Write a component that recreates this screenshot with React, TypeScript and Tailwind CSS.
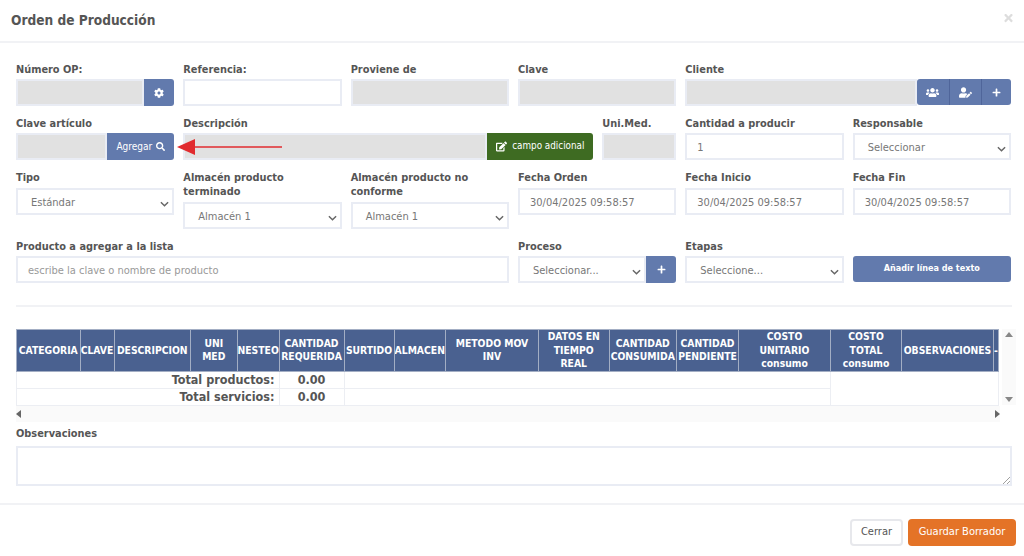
import { FaCog, FaEdit, FaPlus, FaSearch, FaTimes, FaUserEdit, FaUsers } from 'react-icons/fa'

const fieldBase = 'h-[27px] w-full border-2 border-[#e9ecf4] pt-[4px] text-[11px] text-[#777]'
const grayField = 'h-[27px] border-2 border-[#e9ecf4] bg-[#e1e1e1]'
const blueBtn = 'flex items-center justify-center bg-[#627aad] text-white'

function Label({ children }: { children: React.ReactNode }) {
  return <label className="block pt-[1px] text-[10.9px] font-bold leading-[14px] text-[#555]">{children}</label>
}

function Chevron() {
  return (
    <svg viewBox="0 0 10 6" className="h-[6px] w-[9px] shrink-0">
      <path d="M1 1l4 4 4-4" fill="none" stroke="#666" strokeWidth="1.6" />
    </svg>
  )
}

function SelectBox({ value }: { value: string }) {
  return (
    <div className={`${fieldBase} flex items-center justify-between bg-white pl-[13px] pr-[3px]`}>
      <span>{value}</span>
      <Chevron />
    </div>
  )
}

function TextBox({ value, placeholder }: { value?: string; placeholder?: string }) {
  return (
    <div className={`${fieldBase} flex items-center bg-white pl-[10px]`}>
      {value}
      {placeholder && <span className="text-[#999]">{placeholder}</span>}
    </div>
  )
}

const columns = [
  { name: ['CATEGORIA'], w: 'w-[63.5px]' },
  { name: ['CLAVE'], w: 'w-[34px]' },
  { name: ['DESCRIPCION'], w: 'w-[76.5px]' },
  { name: ['UNI', 'MED'], w: 'w-[46.5px]' },
  { name: ['NESTEO'], w: 'w-[42px]' },
  { name: ['CANTIDAD', 'REQUERIDA'], w: 'w-[65px]' },
  { name: ['SURTIDO'], w: 'w-[50px]' },
  { name: ['ALMACEN'], w: 'w-[51.5px]' },
  { name: ['METODO MOV', 'INV'], w: 'w-[93px]' },
  { name: ['DATOS EN', 'TIEMPO', 'REAL'], w: 'w-[70.5px]' },
  { name: ['CANTIDAD', 'CONSUMIDA'], w: 'w-[67.5px]' },
  { name: ['CANTIDAD', 'PENDIENTE'], w: 'w-[62px]' },
  { name: ['COSTO', 'UNITARIO', 'consumo'], w: 'w-[92px]' },
  { name: ['COSTO', 'TOTAL', 'consumo'], w: 'w-[71px]' },
  { name: ['OBSERVACIONES'], w: 'w-[92px]' },
  { name: ['-'], w: 'w-[5px]' },
]

function OrdersTable() {
  return (
    <table className="w-[982px] table-fixed border-collapse">
      <colgroup>
        {columns.map((col, i) => (
          <col key={i} className={col.w} />
        ))}
      </colgroup>
      <thead>
        <tr className="h-[41px]">
          {columns.map((col, i) => (
            <th
              key={i}
              className="overflow-hidden whitespace-nowrap border border-[#a3aec4] bg-[#4a6190] p-0 text-center text-[10.3px] font-bold leading-[13.5px] text-white"
            >
              {col.name.map((line) => (
                <div key={line}>{line}</div>
              ))}
            </th>
          ))}
        </tr>
      </thead>
      <tbody className="text-[12.5px] font-bold leading-[16px] text-[#555]">
        <tr className="h-[17px]">
          <td colSpan={5} className="border border-[#eceef3] p-0 pr-[4px] text-right">Total productos:</td>
          <td className="border border-[#eceef3] p-0 text-center">0.00</td>
          <td colSpan={7} className="border border-[#eceef3] p-0" />
          <td rowSpan={2} colSpan={3} className="border border-[#eceef3] p-0" />
        </tr>
        <tr className="h-[17px]">
          <td colSpan={5} className="border border-[#eceef3] p-0 pr-[4px] text-right">Total servicios:</td>
          <td className="border border-[#eceef3] p-0 text-center">0.00</td>
          <td colSpan={7} className="border border-[#eceef3] p-0" />
        </tr>
      </tbody>
    </table>
  )
}

export default function App() {
  return (
    <div className="flex h-[556px] w-[1024px] flex-col overflow-hidden bg-white font-['DejaVu_Sans_Condensed','DejaVu_Sans',sans-serif]">
      <header className="flex h-[43px] shrink-0 items-start justify-between border-b-2 border-[#f1f2f5] pl-[11px] pr-[10px]">
        <h1 className="mt-[12px] text-[13.6px] font-bold leading-[17px] text-[#555]">Orden de Producción</h1>
        <FaTimes className="mt-[12px] h-[12px] w-[11px] text-[#ddd]" />
      </header>

      <div className="shrink-0 pl-[16px] pr-[12px]">
        <div className="grid w-[995px] grid-cols-6 gap-x-[9px] pt-[19px]">
          <div className="h-[54px]">
            <Label>Número OP:</Label>
            <div className="mt-[2px] flex">
              <div className={`${grayField} flex-1`} />
              <div className={`${blueBtn} h-[27px] w-[30px] rounded-r-[3px]`}>
                <FaCog className="h-[10px] w-[10px]" />
              </div>
            </div>
          </div>
          <div>
            <Label>Referencia:</Label>
            <div className="mt-[2px]"><TextBox /></div>
          </div>
          <div>
            <Label>Proviene de</Label>
            <div className={`${grayField} mt-[2px]`} />
          </div>
          <div>
            <Label>Clave</Label>
            <div className={`${grayField} mt-[2px]`} />
          </div>
          <div className="col-span-2">
            <Label>Cliente</Label>
            <div className="mt-[2px] flex">
              <div className={`${grayField} flex-1`} />
              <div className={`${blueBtn} h-[26px] w-[32px] rounded-l-[3px]`}><FaUsers className="h-[13px] w-[13px]" /></div>
              <div className={`${blueBtn} h-[26px] w-[32px] border-l border-[#4f659a]`}><FaUserEdit className="h-[13px] w-[13px]" /></div>
              <div className={`${blueBtn} h-[26px] w-[30px] rounded-r-[3px] border-l border-[#4f659a]`}><FaPlus className="h-[9px] w-[9px]" /></div>
            </div>
          </div>

          <div className="h-[54px]">
            <Label>Clave artículo</Label>
            <div className="mt-[2px] flex">
              <div className={`${grayField} flex-1`} />
              <div className={`${blueBtn} h-[27px] w-[67px] gap-[4px] rounded-r-[3px] text-[10px]`}>
                Agregar <FaSearch className="h-[9px] w-[9px]" />
              </div>
            </div>
          </div>
          <div className="col-span-3 grid grid-cols-[1fr_74px] gap-x-[9px]">
            <div>
              <Label>Descripción</Label>
              <div className="relative mt-[2px] flex">
                <svg viewBox="0 0 112 16" className="absolute left-[-6px] top-[6px] h-[16px] w-[112px]">
                  <path d="M18 8h87" stroke="#e12b2f" strokeWidth="1.6" />
                  <path d="M0 8l18-8v16z" fill="#e12b2f" />
                </svg>
                <div className={`${grayField} flex-1`} />
                <div className="flex h-[27px] w-[106px] items-center justify-center gap-[5px] rounded-r-[3px] bg-[#3e6b22] text-[9.8px] text-white">
                  <FaEdit className="h-[11px] w-[11px]" /> campo adicional
                </div>
              </div>
            </div>
            <div>
              <Label>Uni.Med.</Label>
              <div className={`${grayField} mt-[2px]`} />
            </div>
          </div>
          <div>
            <Label>Cantidad a producir</Label>
            <div className="mt-[2px]"><TextBox value="1" /></div>
          </div>
          <div>
            <Label>Responsable</Label>
            <div className="mt-[2px]"><SelectBox value="Seleccionar" /></div>
          </div>

          <div className="h-[69px]">
            <Label>Tipo</Label>
            <div className="mt-[3px]"><SelectBox value="Estándar" /></div>
          </div>
          <div>
            <Label>Almacén producto terminado</Label>
            <div className="mt-[3px]"><SelectBox value="Almacén 1" /></div>
          </div>
          <div>
            <Label>Almacén producto no conforme</Label>
            <div className="mt-[3px]"><SelectBox value="Almacén 1" /></div>
          </div>
          <div>
            <Label>Fecha Orden</Label>
            <div className="mt-[3px]"><TextBox value="30/04/2025 09:58:57" /></div>
          </div>
          <div>
            <Label>Fecha Inicio</Label>
            <div className="mt-[3px]"><TextBox value="30/04/2025 09:58:57" /></div>
          </div>
          <div>
            <Label>Fecha Fin</Label>
            <div className="mt-[3px]"><TextBox value="30/04/2025 09:58:57" /></div>
          </div>

          <div className="col-span-3">
            <Label>Producto a agregar a la lista</Label>
            <div className="mt-[2px]"><TextBox placeholder="escribe la clave o nombre de producto" /></div>
          </div>
          <div>
            <Label>Proceso</Label>
            <div className="mt-[2px] flex">
              <div className="min-w-0 flex-1"><SelectBox value="Seleccionar..." /></div>
              <div className={`${blueBtn} h-[27px] w-[30px] rounded-r-[3px]`}><FaPlus className="h-[9px] w-[9px]" /></div>
            </div>
          </div>
          <div>
            <Label>Etapas</Label>
            <div className="mt-[2px]"><SelectBox value="Seleccione..." /></div>
          </div>
          <div className="pt-[17px]">
            <div className={`${blueBtn} h-[26px] rounded-[3px] text-[9px] font-bold`}>Añadir línea de texto</div>
          </div>
        </div>

        <div className="mt-[22px] border-t-2 border-[#f1f2f5]" />
      </div>

      <div className="relative ml-[16px] mt-[22px] h-[93px] w-[1000px] shrink-0 overflow-hidden">
        <OrdersTable />
        <div className="flex h-[17px] w-[984px] items-center justify-between bg-[#fafafa]">
          <span className="h-0 w-0 border-y-[4px] border-r-[5px] border-y-transparent border-r-[#666]" />
          <span className="h-0 w-0 border-y-[4px] border-l-[5px] border-y-transparent border-l-[#666]" />
        </div>
        <div className="absolute right-0 top-0 flex h-[76px] w-[14px] flex-col items-center justify-between bg-[#fafafa] py-[3px]">
          <span className="h-0 w-0 border-x-[4px] border-b-[5px] border-x-transparent border-b-[#888]" />
          <span className="h-0 w-0 border-x-[4px] border-t-[5px] border-x-transparent border-t-[#888]" />
        </div>
      </div>

      <div className="mt-[4px] shrink-0 pl-[16px] pr-[12px]">
        <Label>Observaciones</Label>
        <div className="relative mt-[5px] h-[40px] border-2 border-[#e9ecf4] bg-white">
          <svg viewBox="0 0 8 8" className="absolute bottom-0 right-0 h-[8px] w-[8px]">
            <path d="M1 8l7-7M5 8l3-3" stroke="#888" strokeWidth="0.8" />
          </svg>
        </div>
      </div>

      <footer className="mt-[17px] flex flex-1 items-start justify-end gap-[5px] border-t-2 border-[#f1f2f5] pr-[8px] pt-[14px]">
        <div className="flex h-[27px] w-[53px] items-center justify-center rounded-[4px] border-2 border-[#e7e8ec] text-[11px] text-[#555]">Cerrar</div>
        <div className="flex h-[27px] w-[108px] items-center justify-center rounded-[4px] bg-[#e47327] text-[11px] text-white">Guardar Borrador</div>
      </footer>
    </div>
  )
}
